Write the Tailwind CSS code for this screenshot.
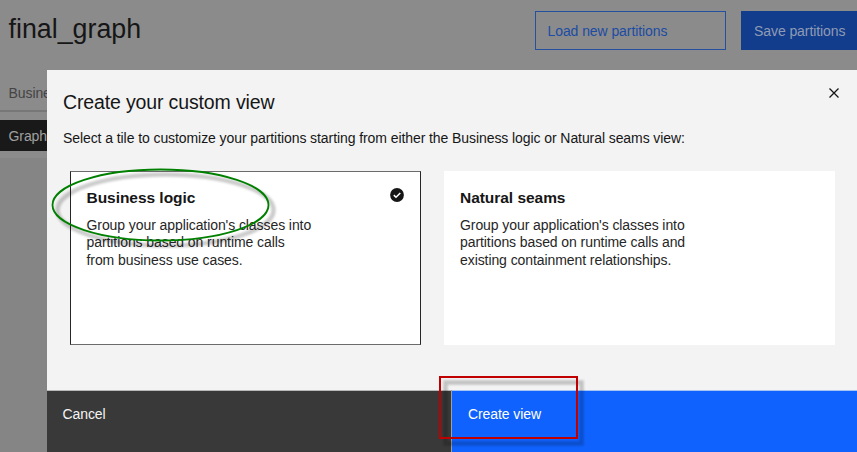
<!DOCTYPE html>
<html lang="en">
<head>
<meta charset="utf-8">
<title>final_graph</title>
<script src="https://cdn.jsdelivr.net/npm/@tailwindcss/browser@4"></script>
</head>
<body class="relative h-[452px] w-[857px] overflow-hidden bg-[#8b8b8b] font-['Liberation_Sans',Arial,sans-serif] text-[14px] leading-[18px] tracking-[-0.08px] text-[#161616]">
<main class="flex h-full flex-col">
  <header class="flex h-[70px] shrink-0 items-start pl-[8.5px]">
    <h1 class="mt-[12px] flex-1 text-[26.8px] leading-[34px] tracking-[0px]">final_graph</h1>
    <button class="mt-[11px] mr-[15px] flex h-[39px] w-[191px] items-center border border-[#2450a0] pl-[11.5px] text-[#1c4ba3]">Load new partitions</button>
    <button class="mt-[11px] flex h-[39px] w-[116px] items-center bg-[#123d8c] pl-[13px] whitespace-nowrap text-[#8f9bb4]">Save partitions</button>
  </header>
  <nav class="h-[42px] shrink-0 border-b-2 border-[#777777] pt-[14px] pl-[8.5px] text-[#444444]">Busine</nav>
  <div class="mt-[8px] flex h-[31px] shrink-0 items-center bg-[#191919] pl-[8.5px] text-[#a0a0a0]">Graph</div>
  <div class="mt-[7px] flex-1 bg-[#858585]"></div>
</main>

<section role="dialog" class="absolute top-[70px] left-[47px] flex h-[382px] w-[810px] flex-col bg-[#f3f3f3]">
  <div class="flex h-[49px] shrink-0 items-start justify-between pr-[18px] pl-[16px]">
    <h2 class="mt-[19px] text-[19.5px] leading-[26px] tracking-[-0.14px]">Create your custom view</h2>
    <svg class="mt-[18px] h-[10px] w-[10px]" viewBox="0 0 10 10" fill="none" stroke="#161616" stroke-width="1.3"><path d="M.5.5l9 9M9.5.5l-9 9"/></svg>
  </div>
  <p class="mt-[10px] pl-[16px]">Select a tile to customize your partitions starting from either the Business logic or Natural seams view:</p>
  <div class="mt-[24px] flex gap-[23px] pl-[23px]">
    <article class="flex h-[174px] w-[351px] items-start justify-between border border-t-[#6b6b6b] border-r-[#262626] border-b-[#6b6b6b] border-l-[#262626] bg-white pt-[16px] pr-[16px] pl-[15.5px]">
      <div>
        <h3 class="text-[15.5px] leading-[20px] font-bold tracking-[-0.04px]">Business logic</h3>
        <p class="mt-[9px] leading-[17.4px] text-[#262626]">Group your application's classes into<br>partitions based on runtime calls<br>from business use cases.</p>
      </div>
      <svg class="h-[14px] w-[14px]" viewBox="0 0 14 14"><circle cx="7" cy="7" r="6.9" fill="#161616"/><path d="M3.8 7.1l2.2 2.2 4.3-4.3" fill="none" stroke="#fff" stroke-width="1.5"/></svg>
    </article>
    <article class="h-[174px] w-[391px] bg-white pt-[17px] pl-[16px]">
      <h3 class="text-[15.5px] leading-[20px] font-bold tracking-[-0.04px]">Natural seams</h3>
      <p class="mt-[9px] leading-[17.4px] text-[#262626]">Group your application's classes into<br>partitions based on runtime calls and<br>existing containment relationships.</p>
    </article>
  </div>
  <footer class="mt-auto flex h-[62px] text-white">
    <button class="flex w-[404px] items-start border-t border-t-[#b9b9b9] bg-[#393939] pt-[14px] pl-[15.5px] text-[#f4f4f4]">Cancel</button>
    <div class="w-px bg-[#a0a0a0]"></div>
    <button class="flex flex-1 items-start border-t border-t-[#a7c4f7] bg-[#0f62fe] pt-[14px] pl-[16px]">Create view</button>
  </footer>
</section>

<svg class="pointer-events-none absolute inset-0 h-[452px] w-[857px]" viewBox="0 0 857 452" fill="none">
  <defs><filter id="soft" x="-10%" y="-20%" width="120%" height="140%"><feGaussianBlur stdDeviation="1.3"/></filter></defs>
  <g stroke="#000" stroke-opacity=".2" stroke-width="4.5" filter="url(#soft)">
    <ellipse cx="165.5" cy="210" rx="108" ry="35.5"/>
    <path d="M445.5 382.5h136v61h-136z"/>
  </g>
  <ellipse cx="160.5" cy="205" rx="108" ry="35.5" stroke="#008000" stroke-width="1.8"/>
  <path d="M440 377h137v61h-137z" stroke="#c00000" stroke-width="2"/>
</svg>
</body>
</html>
